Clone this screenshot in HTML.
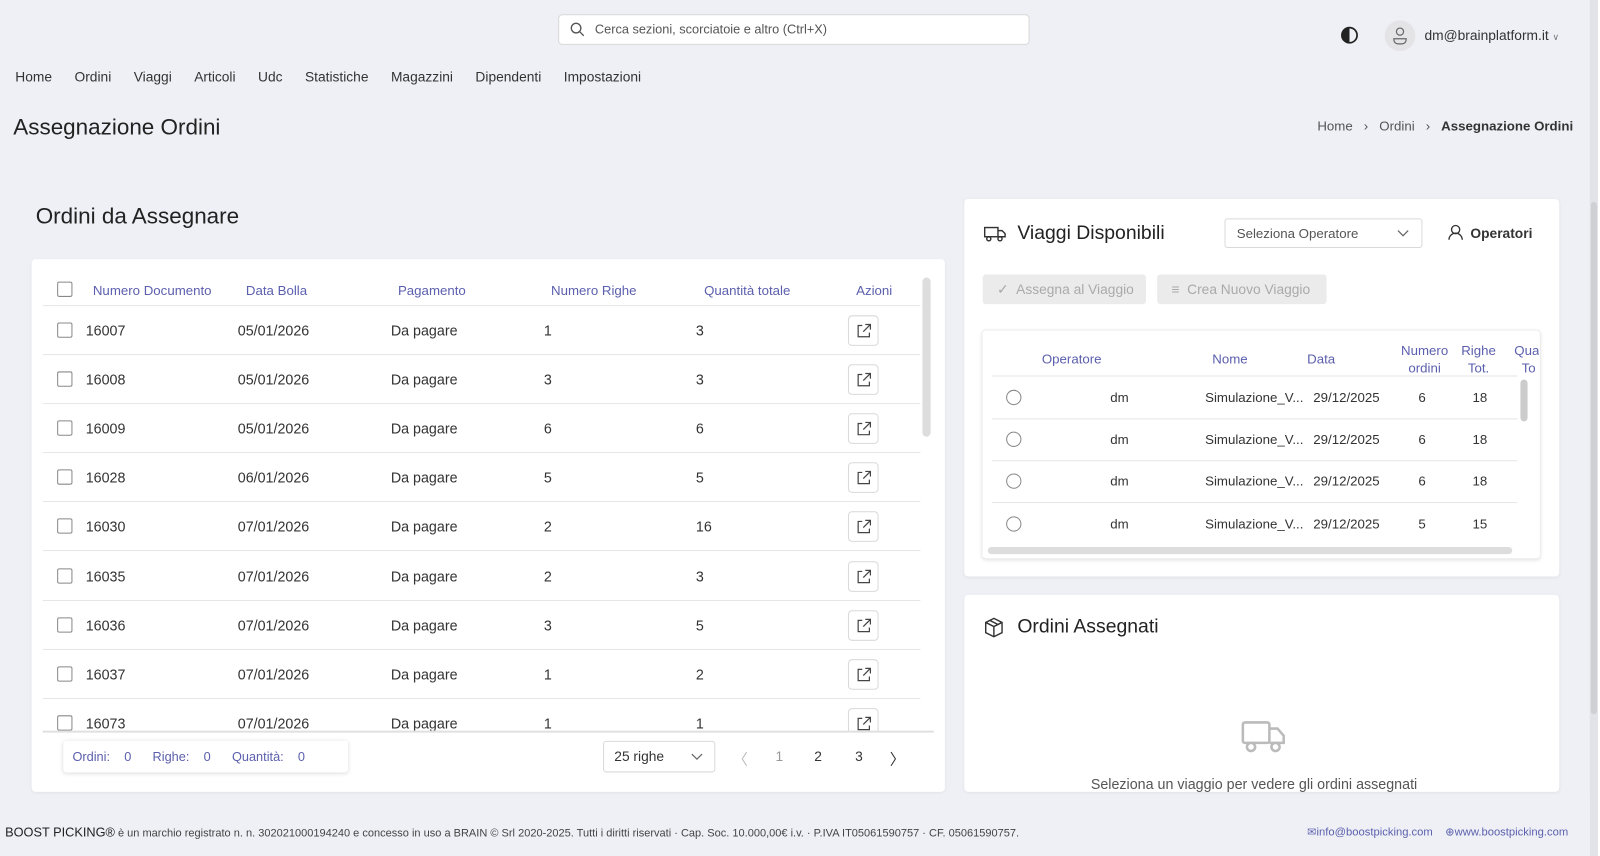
<!DOCTYPE html>
<html><head><meta charset="utf-8"><style>
*{box-sizing:border-box;margin:0;padding:0}
body{width:1600px;height:839px;overflow:hidden;background:#eef0f5;font-family:"Liberation Sans",sans-serif;color:#333;font-size:14px}
#w{position:absolute;left:0;top:0;width:1568px;height:823px;transform:scale(1.020408);transform-origin:0 0}
.a{position:absolute;white-space:nowrap}
.card{position:absolute;background:#fff;border-radius:4px;box-shadow:0 1px 3px rgba(0,0,0,.06)}
.hd{color:#5b5fad;font-size:13px}
.cb{position:absolute;width:15px;height:15px;border:1px solid #888;border-radius:2px;background:#fff}
.ab{position:absolute;width:30px;height:30px;border:1px solid #d9d9d9;border-radius:4px;background:#fff}
.ln{position:absolute;height:1px;background:#e6e6e6}
.rd{position:absolute;width:15px;height:15px;border:1px solid #888;border-radius:50%}
</style></head><body><div id="w">
<div class="a" style="left:547px;top:14px;width:462px;height:30px;background:#fff;border:1px solid #d9d9d9;border-radius:4px"></div>
<svg class="a" style="left:558px;top:21px" width="15" height="15" viewBox="0 0 16 16" fill="none" stroke="#555" stroke-width="1.4"><circle cx="7" cy="7" r="5"/><path d="M11 11l4 4"/></svg>
<div class="a" style="left:583px;top:22px;font-size:12.5px;color:#555">Cerca sezioni, scorciatoie e altro (Ctrl+X)</div>
<svg class="a" style="left:1314px;top:26px" width="17" height="17" viewBox="0 0 16 16"><circle cx="8" cy="8" r="7" fill="none" stroke="#222" stroke-width="1.6"/><path d="M8 1a7 7 0 0 0 0 14z" fill="#222"/></svg>
<div class="a" style="left:1357px;top:20px;width:30px;height:30px;border-radius:50%;background:#e4e4e6"></div>
<svg class="a" style="left:1364px;top:26px" width="16" height="18" viewBox="0 0 16 18" fill="none" stroke="#666" stroke-width="1.2"><circle cx="8" cy="5" r="3.5"/><path d="M2 12h12v1a4 4 0 0 1-4 4H6a4 4 0 0 1-4-4z"/></svg>
<div class="a" style="left:1396px;top:27px;font-size:13.5px;color:#333">dm@brainplatform.it <span style="font-size:9px;color:#777">∨</span></div>
<div class="a" style="left:15px;top:68px;font-size:13.5px;color:#333">
<span style="margin-right:22px">Home</span><span style="margin-right:22px">Ordini</span><span style="margin-right:22px">Viaggi</span><span style="margin-right:22px">Articoli</span><span style="margin-right:22px">Udc</span><span style="margin-right:22px">Statistiche</span><span style="margin-right:22px">Magazzini</span><span style="margin-right:22px">Dipendenti</span><span>Impostazioni</span></div>
<div class="a" style="left:13px;top:112px;font-size:22px;color:#222">Assegnazione Ordini</div>
<div class="a" style="left:1291px;top:116px;font-size:13px;color:#555">Home &nbsp;&nbsp;›&nbsp;&nbsp; Ordini &nbsp;&nbsp;›&nbsp;&nbsp; <b style="color:#333">Assegnazione Ordini</b></div>

<div class="a" style="left:35px;top:199px;font-size:22px;color:#222">Ordini da Assegnare</div>
<div class="card" style="left:31px;top:254px;width:895px;height:522px"></div>
<div class="a" style="left:904px;top:272px;width:8px;height:156px;background:#ddd;border-radius:4px"></div>
<div class="cb" style="left:56px;top:276px"></div>
<div class="a hd" style="left:91px;top:277px">Numero Documento</div>
<div class="a hd" style="left:241px;top:277px">Data Bolla</div>
<div class="a hd" style="left:390px;top:277px">Pagamento</div>
<div class="a hd" style="left:540px;top:277px">Numero Righe</div>
<div class="a hd" style="left:690px;top:277px">Quantità totale</div>
<div class="a hd" style="left:839px;top:277px">Azioni</div>
<div class="ln" style="left:42px;top:299px;width:860px"></div>
<div class="a" style="left:0;top:300px;width:920px;height:416px;overflow:hidden"><div id="rows" style="position:absolute;left:0;top:-300px"></div></div>
<div class="a" style="left:42px;top:716px;width:873px;height:2px;background:#e0e0e0"></div>
<div class="a" style="left:62px;top:726px;width:279px;height:31px;background:#fff;box-shadow:0 1px 4px rgba(0,0,0,.15);border-radius:3px"></div>
<div class="a" style="left:71px;top:735px;font-size:12.5px;color:#5b5fad">Ordini: &nbsp;&nbsp; 0 &nbsp;&nbsp;&nbsp;&nbsp; Righe: &nbsp;&nbsp; 0 &nbsp;&nbsp;&nbsp;&nbsp; Quantità: &nbsp;&nbsp; 0</div>
<div class="a" style="left:591px;top:726px;width:110px;height:31px;border:1px solid #d9d9d9;border-radius:3px"></div>
<div class="a" style="left:602px;top:734px;font-size:13.5px">25 righe</div>
<svg class="a" style="left:677px;top:738px" width="12" height="8" viewBox="0 0 12 8" fill="none" stroke="#666" stroke-width="1.2"><path d="M1 1l5 5 5-5"/></svg>
<div class="a" style="left:718px;top:733px;font-size:15px;color:#bbb">〈</div>
<div class="a" style="left:760px;top:734px;font-size:13.5px;color:#999">1</div>
<div class="a" style="left:798px;top:734px;font-size:13.5px">2</div>
<div class="a" style="left:838px;top:734px;font-size:13.5px">3</div>
<div class="a" style="left:872px;top:733px;font-size:15px">〉</div>

<div class="card" style="left:945px;top:195px;width:583px;height:370px"></div>
<svg class="a" style="left:964px;top:221px" width="22" height="16" viewBox="0 0 22 16" fill="none" stroke="#333" stroke-width="1.4"><rect x="1" y="2" width="13" height="9"/><path d="M14 5h4l3 3v3h-7"/><circle cx="5" cy="13" r="2"/><circle cx="16" cy="13" r="2"/></svg>
<div class="a" style="left:997px;top:218px;font-size:19px;color:#222">Viaggi Disponibili</div>
<div class="a" style="left:1200px;top:214px;width:194px;height:29px;border:1px solid #d9d9d9;border-radius:3px"></div>
<div class="a" style="left:1212px;top:221px;font-size:13px;color:#555">Seleziona Operatore</div>
<svg class="a" style="left:1369px;top:225px" width="12" height="8" viewBox="0 0 12 8" fill="none" stroke="#666" stroke-width="1.2"><path d="M1 1l5 5 5-5"/></svg>
<svg class="a" style="left:1419px;top:220px" width="15" height="16" viewBox="0 0 15 16" fill="none" stroke="#333" stroke-width="1.3"><circle cx="7.5" cy="5" r="4"/><path d="M1 15a6.5 6.5 0 0 1 13 0"/></svg>
<div class="a" style="left:1441px;top:221px;font-size:13.5px;font-weight:bold;color:#333">Operatori</div>
<div class="a" style="left:963px;top:269px;width:160px;height:29px;background:#ebebeb;border-radius:3px"></div>
<div class="a" style="left:977px;top:276px;font-size:13.5px;color:#aaa">✓ &nbsp;Assegna al Viaggio</div>
<div class="a" style="left:1134px;top:269px;width:166px;height:29px;background:#ebebeb;border-radius:3px"></div>
<div class="a" style="left:1148px;top:276px;font-size:13.5px;color:#aaa">≡ &nbsp;Crea Nuovo Viaggio</div>
<div class="a" style="left:962px;top:323px;width:548px;height:225px;background:#fff;border:1px solid #eee;border-radius:4px;box-shadow:0 1px 3px rgba(0,0,0,.1)"></div>
<div class="a hd" style="left:1021px;top:344px">Operatore</div>
<div class="a hd" style="left:1188px;top:344px">Nome</div>
<div class="a hd" style="left:1281px;top:344px">Data</div>
<div class="a hd" style="left:1373px;top:335px;text-align:center;line-height:17px">Numero<br>ordini</div>
<div class="a hd" style="left:1432px;top:335px;text-align:center;line-height:17px">Righe<br>Tot.</div>
<div class="a" style="left:1484px;top:335px;width:24px;overflow:hidden"><div class="hd" style="line-height:17px;white-space:nowrap">Qua<br>&nbsp;&nbsp;To</div></div>
<div class="ln" style="left:972px;top:368px;width:515px"></div>
<div id="vrows"></div>
<div class="a" style="left:1490px;top:372px;width:7px;height:41px;background:#ccc;border-radius:4px"></div>
<div class="a" style="left:968px;top:536px;width:514px;height:7px;background:#ddd;border-radius:4px"></div>

<div class="card" style="left:945px;top:583px;width:583px;height:193px"></div>
<svg class="a" style="left:964px;top:605px" width="20" height="20" viewBox="0 0 20 20" fill="none" stroke="#333" stroke-width="1.4"><path d="M10 1l8 4v10l-8 4-8-4V5z"/><path d="M2 5l8 4 8-4M10 9v10M6 3l8 4"/></svg>
<div class="a" style="left:997px;top:604px;font-size:19px;color:#222">Ordini Assegnati</div>
<svg class="a" style="left:1216px;top:706px" width="44" height="32" viewBox="0 0 44 32" fill="none" stroke="#bbb" stroke-width="2.5"><rect x="2" y="2" width="26" height="20" rx="2"/><path d="M28 8h8l6 7v7H28"/><circle cx="10" cy="26" r="4" fill="#fff"/><circle cx="34" cy="26" r="4" fill="#fff"/></svg>
<div class="a" style="left:1069px;top:760px;font-size:14px;color:#555">Seleziona un viaggio per vedere gli ordini assegnati</div>
<div class="a" style="left:1566px;top:0;width:4px;height:839px;background:#fff"></div>
<div class="a" style="left:1558px;top:0;width:8px;height:839px;background:#e2e3e8"></div>
<div class="a" style="left:1559px;top:198px;width:6px;height:502px;background:#cfd0d4;border-radius:3px"></div>
<div class="a" style="left:0;top:779px;width:1558px;height:60px;background:#eef0f5"></div>
<div class="a" style="left:5px;top:809px;font-size:10.8px;color:#444"><span style="font-size:12.5px;color:#222">BOOST PICKING®</span> è un marchio registrato n. n. 302021000194240 e concesso in uso a BRAIN © Srl 2020-2025. Tutti i diritti riservati · Cap. Soc. 10.000,00€ i.v. · P.IVA IT05061590757 · CF. 05061590757.</div>
<div class="a" style="left:1281px;top:809px;font-size:11px;color:#5b5fad">✉info@boostpicking.com &nbsp;&nbsp; ⊕www.boostpicking.com</div>
</div>
<script>
var d=[["16007","05/01/2026","1","3"],["16008","05/01/2026","3","3"],["16009","05/01/2026","6","6"],["16028","06/01/2026","5","5"],["16030","07/01/2026","2","16"],["16035","07/01/2026","2","3"],["16036","07/01/2026","3","5"],["16037","07/01/2026","1","2"],["16073","07/01/2026","1","1"]];
var h="";d.forEach(function(r,i){var y=324+i*48.1;
h+='<div class="cb" style="left:56px;top:'+(y-8)+'px"></div><div class="a" style="left:84px;top:'+(y-8)+'px">'+r[0]+'</div><div class="a" style="left:233px;top:'+(y-8)+'px">'+r[1]+'</div><div class="a" style="left:383px;top:'+(y-8)+'px">Da pagare</div><div class="a" style="left:533px;top:'+(y-8)+'px">'+r[2]+'</div><div class="a" style="left:682px;top:'+(y-8)+'px">'+r[3]+'</div><div class="ab" style="left:831px;top:'+(y-15)+'px"></div><svg class="a" style="left:839px;top:'+(y-7)+'px" width="15" height="15" viewBox="0 0 15 15" fill="none" stroke="#444" stroke-width="1.2"><path d="M6 2H2v11h11V9M9 1h5v5M14 1L7 8"/></svg>';
if(i<8)h+='<div class="ln" style="left:42px;top:'+(y+23)+'px;width:860px"></div>';});
document.getElementById("rows").innerHTML=h;
var v=[["6","18"],["6","18"],["6","18"],["5","15"]];h="";
v.forEach(function(r,i){var y=390+i*41.2;
h+='<div class="rd" style="left:986px;top:'+(y-8)+'px"></div><div class="a" style="left:1088px;top:'+(y-8)+'px;font-size:13px">dm</div><div class="a" style="left:1181px;top:'+(y-8)+'px;font-size:13px">Simulazione_V...</div><div class="a" style="left:1287px;top:'+(y-8)+'px;font-size:13px">29/12/2025</div><div class="a" style="left:1390px;top:'+(y-8)+'px;font-size:13px">'+r[0]+'</div><div class="a" style="left:1443px;top:'+(y-8)+'px;font-size:13px">'+r[1]+'</div>';
if(i<3)h+='<div class="ln" style="left:972px;top:'+(y+20)+'px;width:515px"></div>';});
document.getElementById("vrows").innerHTML=h;
</script>
</body></html>
